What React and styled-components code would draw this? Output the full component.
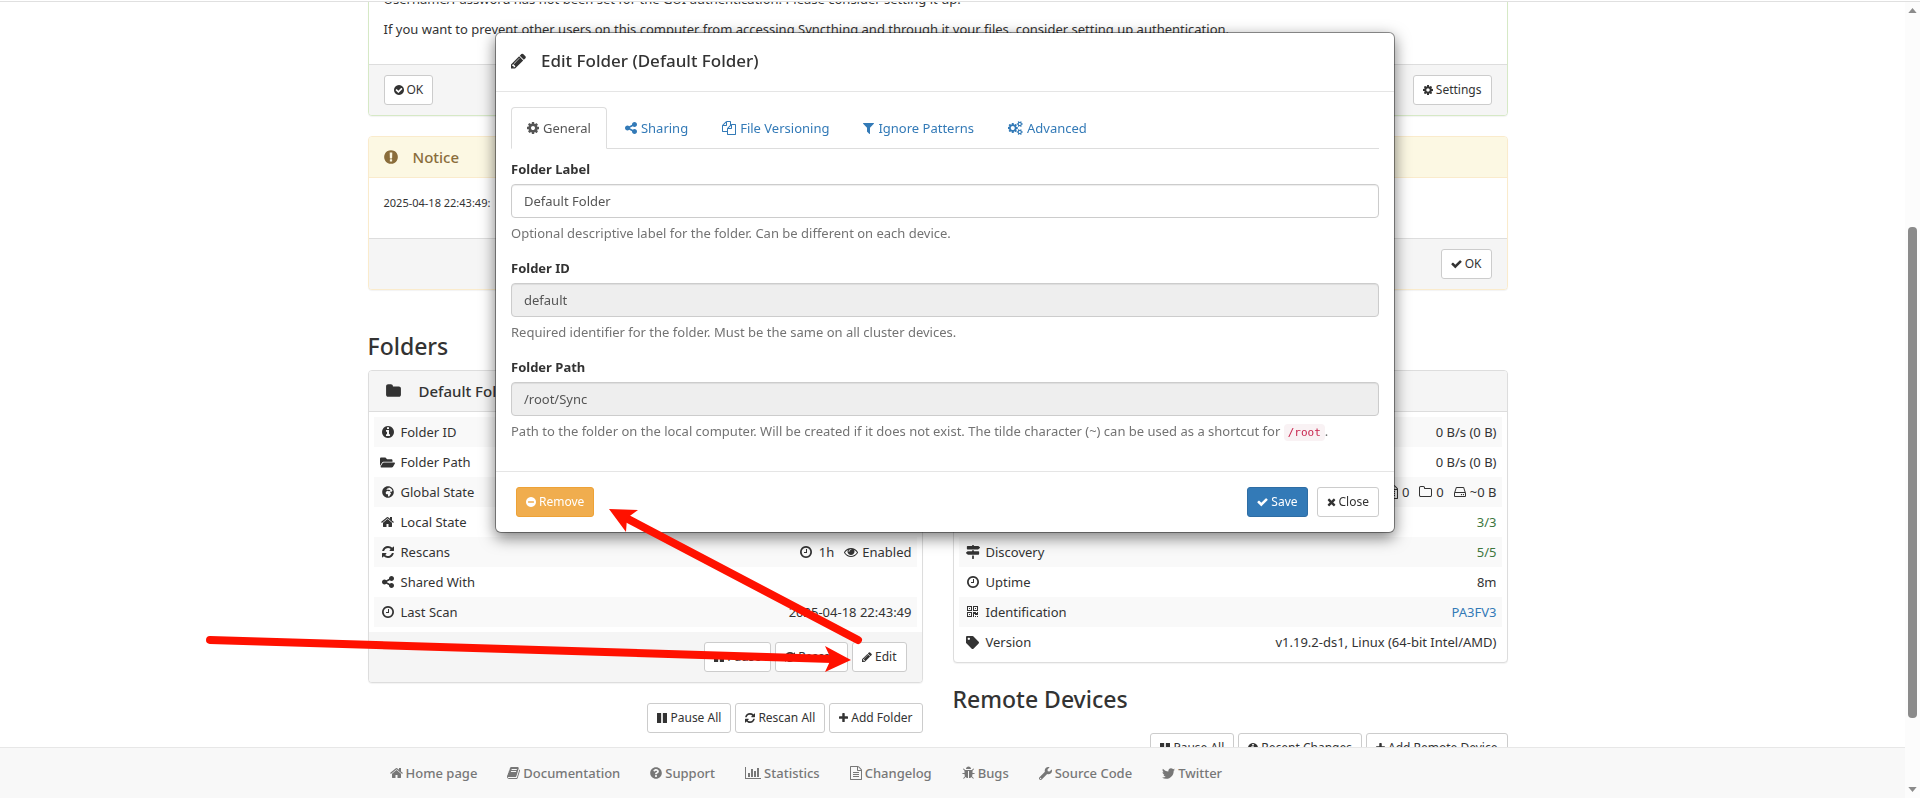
import React from 'react';
import styled, { createGlobalStyle, css } from 'styled-components';
import {
  FaFolderOpen, FaGlobeAfrica, FaMapSigns, FaTag,
  FaQuestionCircle, FaWrench, FaTwitter, FaSitemap, FaCloudDownloadAlt, FaCloudUploadAlt,
} from 'react-icons/fa';

const DISC = 'M1664 896q0 209-103 385.5t-279.5 279.5-385.5 103-385.5-103-279.5-279.5-103-385.5 103-385.5 279.5-279.5 385.5-103 385.5 103 279.5 279.5 103 385.5z';

/* Each glyph: [left edge, advance width, path] on a 1792-unit em. */
const GLYPHS = {
  clock: [128, 1536, 'M1024 544v448q0 14-9 23t-23 9h-320q-14 0-23-9t-9-23v-64q0-14 9-23t23-9h224v-352q0-14 9-23t23-9h64q14 0 23 9t9 23zm416 352q0-148-73-273t-198-198-273-73-273 73-198 198-73 273 73 273 198 198 273 73 273-73 198-198 73-273z' + DISC],
  checkCircle: [128, 1536, 'M1412 734q0-28-18-46l-91-90q-19-19-45-19t-45 19l-408 407-226-226q-19-19-45-19t-45 19l-91 90q-18 18-18 46 0 27 18 45l362 362q19 19 45 19 27 0 46-19l543-543q18-18 18-45z' + DISC],
  minusCircle: [128, 1536, 'M1344 960v-128q0-26-19-45t-45-19h-768q-26 0-45 19t-19 45v128q0 26 19 45t45 19h768q26 0 45-19t19-45z' + DISC],
  exclamation: [128, 1536, 'M1024 1375v-190q0-14-9.5-23.5t-22.5-9.5h-192q-13 0-23 10t-10 23v190q0 13 10 23t23 10h192q13 0 22.5-9.5t9.5-23.5zm-2-344l18-621q0-12-10-18-10-8-24-8h-220q-14 0-24 8-10 6-10 18l17 621q0 10 10 17.5t24 7.5h185q14 0 23.5-7.5t10.5-17.5z' + DISC],
  info: [128, 1536, 'M1152 1376v-160q0-14-9-23t-23-9h-96v-512q0-14-9-23t-23-9h-320q-14 0-23 9t-9 23v160q0 14 9 23t23 9h96v320h-96q-14 0-23 9t-9 23v160q0 14 9 23t23 9h448q14 0 23-9t9-23zm-128-896v-160q0-14-9-23t-23-9h-192q-14 0-23 9t-9 23v160q0 14 9 23t23 9h192q14 0 23-9t9-23z' + DISC],
  refresh: [128, 1536, 'M1639 1056q0 5-1 7-64 268-268 434.5t-478 166.5q-146 0-282.5-55t-243.5-157l-129 129q-19 19-45 19t-45-19-19-45v-448q0-26 19-45t45-19h448q26 0 45 19t19 45-19 45l-137 137q71 66 161 102t187 36q134 0 250-65t186-179q11-17 53-117 8-23 30-23h192q13 0 22.5 9.5t9.5 22.5zm25-800v448q0 26-19 45t-45 19h-448q-26 0-45-19t-19-45 19-45l138-138q-148-137-349-137-134 0-250 65t-186 179q-11 17-53 117-8 23-30 23h-199q-13 0-22.5-9.5t-9.5-22.5v-7q65-268 270-434.5t480-166.5q146 0 284 55.5t245 156.5l130-129q19-19 45-19t45 19 19 45z'],
  pencil: [128, 1536, 'M491 1536l91-91-235-235-91 91v107h128v128h107zm523-928q0-22-22-22-10 0-17 7l-542 542q-7 7-7 17 0 22 22 22 10 0 17-7l542-542q7-7 7-17zm-54-192l416 416-832 832h-416v-416zm683 96q0 53-37 90l-166 166-416-416 166-165q36-38 90-38 53 0 91 38l235 234q37 39 37 91z'],
  cog: [128, 1536, 'M1152 896q0-106-75-181t-181-75-181 75-75 181 75 181 181 75 181-75 75-181zm512-109v222q0 12-8 23t-20 13l-185 28q-19 54-39 91 35 50 107 138 10 12 10 25t-9 23q-27 37-99 108t-94 71q-12 0-26-9l-138-108q-44 23-91 38-16 136-29 186-7 28-36 28h-222q-14 0-24.5-8.5t-11.5-21.5l-28-184q-49-16-90-37l-141 107q-10 9-25 9-14 0-25-11-126-114-165-168-7-10-7-23 0-12 8-23 15-21 51-66.5t54-70.5q-27-50-41-99l-183-27q-13-2-21-12.5t-8-23.5v-222q0-12 8-23t19-13l186-28q14-46 39-92-40-57-107-138-10-12-10-24 0-10 9-23 26-36 98.5-107.5t94.5-71.5q13 0 26 10l138 107q44-23 91-38 16-136 29-186 7-28 36-28h222q14 0 24.5 8.5t11.5 21.5l28 184q49 16 90 37l142-107q9-9 24-9 13 0 25 10 129 119 165 170 7 8 7 22 0 12-8 23-15 21-51 66.5t-54 70.5q26 50 41 98l183 28q13 2 21 12.5t8 23.5z'],
  cogs: [0, 1856, 'M832 896q0-106-75-181t-181-75-181 75-75 181 75 181 181 75 181-75 75-181zm768 512q0-52-38-90t-90-38-90 38-38 90q0 53 37.5 90.5t90.5 37.5 90.5-37.5 37.5-90.5zm0-1024q0-52-38-90t-90-38-90 38-38 90q0 53 37.5 90.5t90.5 37.5 90.5-37.5 37.5-90.5zm-384 421v185q0 10-7 19.5t-16 10.5l-155 24q-11 35-32 76 34 48 90 115 7 11 7 20 0 12-7 19-23 30-82.5 89.5t-78.5 59.5q-11 0-21-7l-115-90q-37 19-77 31-11 108-23 155-7 24-30 24h-186q-11 0-20-7.5t-10-17.5l-23-153q-34-10-75-31l-118 89q-7 7-20 7-11 0-21-8-144-133-144-160 0-9 7-19 10-14 41-53t47-61q-23-44-35-82l-152-24q-10-1-17-9.5t-7-19.5v-185q0-10 7-19.5t16-10.5l155-24q11-35 32-76-34-48-90-115-7-11-7-20 0-12 7-20 22-30 82-89t79-59q11 0 21 7l115 90q34-18 77-32 11-108 23-154 7-24 30-24h186q11 0 20 7.5t10 17.5l23 153q34 10 75 31l118-89q8-7 20-7 11 0 21 8 144 133 144 160 0 8-7 19-12 16-42 54t-45 60q23 48 34 82l152 23q10 2 17 10.5t7 19.5zm640 533v140q0 16-149 31-12 27-30 52 51 113 51 138 0 4-4 7-122 71-124 71-8 0-46-47t-52-68q-20 2-30 2t-30-2q-14 21-52 68t-46 47q-2 0-124-71-4-3-4-7 0-25 51-138-18-25-30-52-149-15-149-31v-140q0-16 149-31 13-29 30-52-51-113-51-138 0-4 4-7 4-2 35-20t59-34 30-16q8 0 46 46.5t52 67.5q20-2 30-2t30 2q51-71 92-112l6-2q4 0 124 70 4 3 4 7 0 25-51 138 17 23 30 52 149 15 149 31zm0-1024v140q0 16-149 31-12 27-30 52 51 113 51 138 0 4-4 7-122 71-124 71-8 0-46-47t-52-68q-20 2-30 2t-30-2q-14 21-52 68t-46 47q-2 0-124-71-4-3-4-7 0-25 51-138-18-25-30-52-149-15-149-31v-140q0-16 149-31 13-29 30-52-51-113-51-138 0-4 4-7 4-2 35-20t59-34 30-16q8 0 46 46.5t52 67.5q20-2 30-2t30 2q51-71 92-112l6-2q4 0 124 70 4 3 4 7 0 25-51 138 17 23 30 52 149 15 149 31z'],
  filter: [192, 1408, 'M1595 295q17 41-14 70l-493 493v742q0 42-39 59-13 5-25 5-27 0-45-19l-256-256q-19-19-19-45v-486l-493-493q-31-29-14-70 17-39 59-39h1280q42 0 59 39z'],
  check: [64, 1664, 'M1671 566q0 40-28 68l-724 724-136 136q-28 28-68 28t-68-28l-136-136-362-362q-28-28-28-68t28-68l136-136q28-28 68-28t68 28l294 295 656-657q28-28 68-28t68 28l136 136q28 28 28 68z'],
  times: [192, 1408, 'M1490 1322q0 40-28 68l-136 136q-28 28-68 28t-68-28l-294-294-294 294q-28 28-68 28t-68-28l-136-136q-28-28-28-68t28-68l294-294-294-294q-28-28-28-68t28-68l136-136q28-28 68-28t68 28l294 294 294-294q28-28 68-28t68 28l136 136q28 28 28 68t-28 68l-294 294 294 294q28 28 28 68z'],
  pause: [128, 1536, 'M1664 192v1408q0 26-19 45t-45 19h-512q-26 0-45-19t-19-45v-1408q0-26 19-45t45-19h512q26 0 45 19t19 45zm-896 0v1408q0 26-19 45t-45 19h-512q-26 0-45-19t-19-45v-1408q0-26 19-45t45-19h512q26 0 45 19t19 45z'],
  plus: [192, 1408, 'M1600 736v192q0 40-28 68t-68 28h-416v416q0 40-28 68t-68 28h-192q-40 0-68-28t-28-68v-416h-416q-40 0-68-28t-28-68v-192q0-40 28-68t68-28h416v-416q0-40 28-68t68-28h192q40 0 68 28t28 68v416h416q40 0 68 28t28 68z'],
  home: [64, 1664, 'M1472 992v480q0 26-19 45t-45 19h-384v-384h-256v384h-384q-26 0-45-19t-19-45v-480q0-1 .5-3t.5-3l575-474 575 474q1 2 1 6zm223-69l-62 74q-8 9-21 11h-3q-13 0-21-7l-692-577-692 577q-12 8-24 7-13-2-21-11l-62-74q-8-10-7-23.5t11-21.5l719-599q32-26 76-26t76 26l244 204v-195q0-14 9-23t23-9h192q14 0 23 9t9 23v408l219 182q10 8 11 21.5t-7 23.5z'],
  folder: [64, 1664, 'M1728 608v704q0 92-66 158t-158 66h-1216q-92 0-158-66t-66-158v-960q0-92 66-158t158-66h320q92 0 158 66t66 158v32h672q92 0 158 66t66 158z'],
  folderOutline: [64, 1664, 'M1600 1312v-704q0-40-28-68t-68-28h-704q-40 0-68-28t-28-68v-64q0-40-28-68t-68-28h-320q-40 0-68 28t-28 68v960q0 40 28 68t68 28h1216q40 0 68-28t28-68zm128-704v704q0 92-66 158t-158 66h-1216q-92 0-158-66t-66-158v-960q0-92 66-158t158-66h320q92 0 158 66t66 158v32h672q92 0 158 66t66 158z'],
  eye: [0, 1792, 'M1664 960q-152-236-381-353 61 104 61 225 0 185-131.5 316.5t-316.5 131.5-316.5-131.5-131.5-316.5q0-121 61-225-229 117-381 353 133 205 333.5 326.5t434.5 121.5 434.5-121.5 333.5-326.5zm-720-384q0-20-14-34t-34-14q-125 0-214.5 89.5t-89.5 214.5q0 20 14 34t34 14 34-14 14-34q0-86 61-147t147-61q20 0 34-14t14-34zm848 384q0 34-20 69-140 230-376.5 368.5t-499.5 138.5-499.5-139-376.5-368q-20-35-20-69t20-69q140-229 376.5-368t499.5-139 499.5 139 376.5 368q20 35 20 69z'],
  files: [0, 1792, 'M1696 384q40 0 68 28t28 68v1216q0 40-28 68t-68 28h-960q-40 0-68-28t-28-68v-288h-544q-40 0-68-28t-28-68v-672q0-40 20-88t48-76l408-408q28-28 76-48t88-20h416q40 0 68 28t28 68v328q68-40 128-40h416zm-544 213l-299 299h299v-299zm-640-384l-299 299h299v-299zm196 647l316-316v-416h-384v416q0 40-28 68t-68 28h-416v640h512v-256q0-40 20-88t48-76zm956 804v-1152h-384v416q0 40-28 68t-68 28h-416v640h896z'],
  fileText: [128, 1536, 'M1596 380q28 28 48 76t20 88v1152q0 40-28 68t-68 28h-1344q-40 0-68-28t-28-68v-1600q0-40 28-68t68-28h896q40 0 88 20t76 48zm-444-244v376h376q-10-29-22-41l-313-313q-12-12-41-22zm384 1528v-1024h-416q-40 0-68-28t-28-68v-416h-768v1536h1280zm-1024-864q0-14 9-23t23-9h704q14 0 23 9t9 23v64q0 14-9 23t-23 9h-704q-14 0-23-9t-9-23v-64zm736 224q14 0 23 9t9 23v64q0 14-9 23t-23 9h-704q-14 0-23-9t-9-23v-64q0-14 9-23t23-9h704zm0 256q14 0 23 9t9 23v64q0 14-9 23t-23 9h-704q-14 0-23-9t-9-23v-64q0-14 9-23t23-9h704z'],
  barChart: [0, 2048, 'M640 896v512h-256v-512h256zm384-512v1024h-256v-1024h256zm1024 1152v128h-2048v-1536h128v1408h1920zm-640-896v768h-256v-768h256zm384-384v1152h-256v-1152h256z'],
  share: [128, 1536, 'M1344 1024q133 0 226.5 93.5t93.5 226.5-93.5 226.5-226.5 93.5-226.5-93.5-93.5-226.5q0-12 2-34l-360-180q-92 86-218 86-133 0-226.5-93.5t-93.5-226.5 93.5-226.5 226.5-93.5q126 0 218 86l360-180q-2-22-2-34 0-133 93.5-226.5t226.5-93.5 226.5 93.5 93.5 226.5-93.5 226.5-226.5 93.5q-126 0-218-86l-360 180q2 22 2 34t-2 34l360 180q92-86 218-86z'],
  book: [64, 1664, 'M1703 478q40 57 18 129l-275 906q-19 64-76.5 107.5t-122.5 43.5h-923q-77 0-148.5-53.5t-99.5-131.5q-24-67-2-127 0-4 3-27t4-37q1-8-3-21.5t-3-19.5q2-11 8-21t16.5-23.5 16.5-23.5q23-38 45-91.5t30-91.5q3-10 .5-30t-.5-28q3-11 17-28t17-23q21-36 42-92t25-90q1-9-2.5-32t.5-28q4-13 22-30.5t22-22.5q19-26 42.5-84.5t27.5-96.5q1-8-3-25.5t-2-26.5q2-8 9-18t18-23 17-21q8-12 16.5-30.5t15-35 16-36 19.5-32 26.5-23.5 36-11.5 47.5 5.5l-1 3q38-9 51-9h761q74 0 114 56t18 130l-274 906q-36 119-71.5 153.5t-128.5 34.5h-869q-27 0-38 15-11 16-1 43 24 70 144 70h923q29 0 56-15.5t35-41.5l300-987q7-22 5-57 38 15 59 43zm-1064 2q-4 13 2 22.5t20 9.5h608q13 0 25.5-9.5t16.5-22.5l21-64q4-13-2-22.5t-20-9.5h-608q-13 0-25.5 9.5t-16.5 22.5zm-83 256q-4 13 2 22.5t20 9.5h608q13 0 25.5-9.5t16.5-22.5l21-64q4-13-2-22.5t-20-9.5h-608q-13 0-25.5 9.5t-16.5 22.5z'],
  bug: [64, 1664, 'M1696 960q0 26-19 45t-45 19h-224q0 171-67 290l208 209q19 19 19 45t-19 45q-18 19-45 19t-45-19l-198-197q-5 5-15 13t-42 28.5-65 36.5-82 29-97 13v-896h-128v896q-51 0-101.5-13.5t-87-33-66-39-43.5-32.5l-15-14-183 207q-20 21-48 21-24 0-43-16-19-18-20.5-44.5t15.5-46.5l202-227q-58-114-58-274h-224q-26 0-45-19t-19-45 19-45 45-19h224v-294l-173-173q-19-19-19-45t19-45 45-19 45 19l173 173h844l173-173q19-19 45-19t45 19 19 45-19 45l-173 173v294h224q26 0 45 19t19 45zm-480-576h-640q0-133 93.5-226.5t226.5-93.5 226.5 93.5 93.5 226.5z'],
  qrcode: [192, 1408, 'M576 1152v128h-128v-128h128zm0-768v128h-128v-128h128zm768 0v128h-128v-128h128zm-1024 1023h384v-383h-384v383zm0-767h384v-384h-384v384zm768 0h384v-384h-384v384zm-256 256v640h-640v-640h640zm512 512v128h-128v-128h128zm256 0v128h-128v-128h128zm0-512v384h-384v-128h-128v384h-128v-640h384v128h128v-128h128zm-768-768v640h-640v-640h640zm768 0v640h-640v-640h640z'],
  hdd: [128, 1536, 'M1168 1216q0 33-23.5 56.5t-56.5 23.5-56.5-23.5-23.5-56.5 23.5-56.5 56.5-23.5 56.5 23.5 23.5 56.5zm256 0q0 33-23.5 56.5t-56.5 23.5-56.5-23.5-23.5-56.5 23.5-56.5 56.5-23.5 56.5 23.5 23.5 56.5zm112 160v-320q0-13-9.5-22.5t-22.5-9.5h-1216q-13 0-22.5 9.5t-9.5 22.5v320q0 13 9.5 22.5t22.5 9.5h1216q13 0 22.5-9.5t9.5-22.5zm-1230-480h1180l-157-482q-4-13-16-21.5t-26-8.5h-782q-14 0-26 8.5t-16 21.5zm1358 160v320q0 66-47 113t-113 47h-1216q-66 0-113-47t-47-113v-320q0-25 16-75l197-606q17-53 63-86t101-33h782q55 0 101 33t63 86l197 606q16 50 16 75z'],
};

const PACKAGED = {
  folderOpen: [FaFolderOpen, 1], globe: [FaGlobeAfrica, -2], signs: [FaMapSigns, 0], tag: [FaTag, -1],
  question: [FaQuestionCircle, -2], wrench: [FaWrench, -1], twitter: [FaTwitter, -1],
  sitemap: [FaSitemap, 0], download: [FaCloudDownloadAlt, 0], upload: [FaCloudUploadAlt, 0],
};

function Icon({ name, size = 14 }) {
  if (PACKAGED[name]) {
    const [Packaged, grow] = PACKAGED[name];
    return <Packaged size={size + grow} aria-hidden="true" />;
  }
  const [x, width, d] = GLYPHS[name];
  return (
    <svg viewBox={`${x} 0 ${width} 1792`} width={Math.round((size * width) / 1792)} height={size} fill="currentColor" fillRule="evenodd" aria-hidden="true">
      <path d={d} />
    </svg>
  );
}

const GlobalStyle = createGlobalStyle`
  *, *::before, *::after { box-sizing: border-box; }
  body {
    margin: 0;
    background: #fff;
    color: #333;
    font: 13px/20px "Noto Sans", "Open Sans", sans-serif;
    overflow: hidden;
  }
  svg { display: block; flex: none; }
  h3, h4, p, ul { margin: 0; padding: 0; font-weight: 500; }
  p { font-weight: 400; }
  button, input { font-family: inherit; }
  a { color: #337ab7; text-decoration: none; }
`;

const Shell = styled.div`
  display: grid;
  grid-template: 1px 1fr / 1fr 15px;
  height: 100vh;
  padding-top: 1px;
`;
const TopRule = styled.div`
  grid-column: 1 / -1;
  background: #e0e0e0;
`;
const Page = styled.div`
  display: flex;
  flex-direction: column;
  min-height: 0;
`;
const Content = styled.main`
  flex: 1;
  min-height: 0;
  overflow: hidden;
  padding-right: 30px;
`;
const Container = styled.div`
  max-width: 1140px;
  margin: 0 auto;
`;
const ScrolledContainer = styled(Container)`
  margin-top: -29px;
`;

const TONES = {
  default: { border: '#ddd', head: '#f5f5f5', text: '#333' },
  success: { border: '#d6e9c6', head: '#dff0d8', text: '#3c763d' },
  warning: { border: '#faebcc', head: '#fcf8e3', text: '#8a6d3b' },
};
const Panel = styled.section`
  border: 1px solid ${(p) => TONES[p.$tone || 'default'].border};
  border-radius: 4px;
  background: #fff;
  box-shadow: 0 1px 1px rgba(0, 0, 0, 0.05);
  margin-bottom: 20px;
  overflow: hidden;
`;
const PanelHeading = styled.h4`
  display: flex;
  align-items: center;
  gap: 15px;
  height: 41px;
  padding: 0 15px;
  font-size: 15px;
  line-height: 20px;
  color: ${(p) => TONES[p.$tone || 'default'].text};
  background: ${(p) => TONES[p.$tone || 'default'].head};
  border-bottom: 1px solid ${(p) => TONES[p.$tone || 'default'].border};
`;
const PanelBody = styled.div`
  padding: 15px;
  p { margin-bottom: 10px; }
`;
const LogLine = styled.p`
  font-size: 11px;
`;
const TableBody = styled.div`
  padding: 5px;
`;
const PanelFooter = styled.div`
  display: flex;
  justify-content: ${(p) => p.$align || 'flex-end'};
  gap: 4px;
  padding: 10px 15px;
  background: #f5f5f5;
  border-top: ${(p) => (p.$plain ? '0' : '1px solid #ddd')};
`;

const SOLID = {
  primary: css`color: #fff; background: #337ab7; border-color: #2e6da4;`,
  warning: css`color: #fff; background: #f0ad4e; border-color: #eea236;`,
};
const Button = styled.button`
  display: inline-flex;
  align-items: center;
  gap: 3px;
  height: 30px;
  padding: 0 9px;
  border: 1px solid #ccc;
  border-radius: 3px;
  background: #fff;
  color: #333;
  font-size: 12px;
  line-height: 18px;
  white-space: nowrap;
  cursor: pointer;
  ${(p) => SOLID[p.$kind]}
`;

const Columns = styled.div`
  display: grid;
  grid-template-columns: 1fr 1fr;
  gap: 30px;
  padding-top: 23px;
`;
const SectionTitle = styled.h3`
  font-size: 23px;
  line-height: 26px;
  margin-bottom: 11px;
`;
const LowerTitle = styled(SectionTitle)`
  margin: 23px 0 21px;
`;
const ButtonRow = styled.div`
  display: flex;
  justify-content: flex-end;
  gap: 4px;
`;

const Details = styled.table`
  width: 100%;
  border-collapse: collapse;
  tr:nth-child(odd) { background: #f9f9f9; }
  th, td { padding: 5px; font-weight: 400; height: 30px; }
`;
const RowLabel = styled.span`
  display: flex;
  align-items: center;
  gap: 4px;
`;
const IconSlot = styled.span`
  display: flex;
  justify-content: center;
  width: ${(p) => p.$width || 18}px;
`;
const RowValue = styled.span`
  display: flex;
  justify-content: flex-end;
  align-items: center;
  gap: 10px;
  color: ${(p) => (p.$good ? '#3c763d' : 'inherit')};
`;
const Stat = styled.span`
  display: flex;
  align-items: center;
  gap: ${(p) => p.$gap || 4}px;
`;

const Footer = styled.footer`
  height: 51px;
  flex: none;
  padding-right: 30px;
  background: #f8f8f8;
  border-top: 1px solid #e7e7e7;
`;
const FooterLinks = styled.ul`
  display: flex;
  gap: 30px;
  padding: 15px 22px;
  list-style: none;
`;
const FooterLink = styled.a`
  display: flex;
  align-items: center;
  gap: 3px;
  color: #777;
`;

const Scrollbar = styled.div`
  display: flex;
  flex-direction: column;
  align-items: center;
  padding: 6px 0;
  background: #fcfcfc;
`;
const ScrollSpace = styled.div`
  flex: ${(p) => p.$share};
`;
const ScrollThumb = styled.div`
  flex: 491;
  width: 9px;
  border-radius: 4px;
  background: #8b8b8b;
`;

const Overlay = styled.div`
  position: fixed;
  inset: 0;
  display: flex;
  justify-content: center;
  align-items: flex-start;
  padding: 32px 30px 0 0;
`;
const Dialog = styled.div`
  width: 900px;
  background: #fff;
  border: 1px solid rgba(0, 0, 0, 0.4);
  background-clip: padding-box;
  border-radius: 6px;
  box-shadow: 0 5px 15px rgba(0, 0, 0, 0.5);
`;
const DialogHeader = styled.div`
  display: flex;
  align-items: center;
  gap: 15px;
  height: 59px;
  padding: 0 15px 2px;
  border-bottom: 1px solid #e5e5e5;
`;
const DialogTitle = styled.h4`
  font-size: 17px;
  line-height: 20px;
`;
const DialogBody = styled.div`
  padding: 15px;
`;
const Tabs = styled.div`
  display: flex;
  gap: 2px;
  margin-bottom: 10px;
  border-bottom: 1px solid #ddd;
`;
const Tab = styled.button`
  display: flex;
  align-items: center;
  gap: 4px;
  height: 42px;
  margin-bottom: -1px;
  padding: 0 15px;
  border: 1px solid ${(p) => (p.$active ? '#ddd' : 'transparent')};
  border-bottom-color: ${(p) => (p.$active ? '#fff' : 'transparent')};
  border-radius: 4px 4px 0 0;
  background: ${(p) => (p.$active ? '#fff' : 'transparent')};
  color: ${(p) => (p.$active ? '#555' : '#337ab7')};
  font-size: 13px;
  line-height: 20px;
`;
const Field = styled.div`
  margin-bottom: 15px;
`;
const Label = styled.label`
  display: block;
  margin-bottom: 5px;
  font-weight: 700;
`;
const TextInput = styled.input`
  display: block;
  width: 100%;
  height: 34px;
  padding: 6px 12px;
  border: 1px solid #ccc;
  border-radius: 4px;
  background: ${(p) => (p.readOnly ? '#eee' : '#fff')};
  color: #555;
  font-size: 13px;
  line-height: 20px;
  box-shadow: inset 0 1px 1px rgba(0, 0, 0, 0.075);
`;
const Help = styled.p`
  margin-top: 5px;
  color: #737373;
`;
const Code = styled.code`
  padding: 2px 4px;
  border-radius: 4px;
  background: #f9f2f4;
  color: #c7254e;
  font: 11px/16px "DejaVu Sans Mono", monospace;
`;
const DialogFooter = styled.div`
  display: flex;
  align-items: center;
  gap: 9px;
  padding: 15px 15px 15px 20px;
  border-top: 1px solid #e5e5e5;
`;
const Spacer = styled.div`
  flex: 1;
`;
const Annotations = styled.svg`
  position: fixed;
  inset: 0;
  width: 100%;
  height: 100%;
  pointer-events: none;
`;

const FOLDER_ROWS = [
  ['info', 'Folder ID', 'default'],
  ['folderOpen', 'Folder Path', '/root/Sync'],
  ['globe', 'Global State', ''],
  ['home', 'Local State', ''],
  ['refresh', 'Rescans', (
    <>
      <Stat $gap={7}><Icon name="clock" />1h</Stat>
      <Stat><Icon name="eye" />Enabled</Stat>
    </>
  )],
  ['share', 'Shared With', ''],
  ['clock', 'Last Scan', '2025-04-18 22:43:49'],
];

const DEVICE_ROWS = [
  ['download', 'Download Rate', '0 B/s (0 B)'],
  ['upload', 'Upload Rate', '0 B/s (0 B)'],
  ['home', 'Local State (Total)', (
    <>
      <Stat><Icon name="fileText" />0</Stat>
      <Stat><Icon name="folderOutline" />0</Stat>
      <Stat><Icon name="hdd" />~0 B</Stat>
    </>
  )],
  ['sitemap', 'Listeners', '3/3', true],
  ['signs', 'Discovery', '5/5', true],
  ['clock', 'Uptime', '8m'],
  ['qrcode', 'Identification', <a href="#id">PA3FV3</a>],
  ['tag', 'Version', 'v1.19.2-ds1, Linux (64-bit Intel/AMD)'],
];

const FOOTER_LINKS = [
  ['home', 'Home page'], ['book', 'Documentation'], ['question', 'Support'], ['barChart', 'Statistics'],
  ['fileText', 'Changelog'], ['bug', 'Bugs'], ['wrench', 'Source Code'], ['twitter', 'Twitter'],
];

const TABS = [
  ['cog', 'General'], ['share', 'Sharing'], ['files', 'File Versioning'], ['filter', 'Ignore Patterns'], ['cogs', 'Advanced'],
];

function IconButton({ icon, children, ...rest }) {
  return <Button type="button" {...rest}><Icon name={icon} size={12} />{children}</Button>;
}

function DetailTable({ rows }) {
  return (
    <Details>
      <tbody>
        {rows.map(([icon, label, value, good]) => (
          <tr key={label}>
            <th scope="row"><RowLabel><IconSlot><Icon name={icon} /></IconSlot>{label}</RowLabel></th>
            <td><RowValue $good={good}>{value}</RowValue></td>
          </tr>
        ))}
      </tbody>
    </Details>
  );
}

function EditFolderDialog() {
  return (
    <Overlay>
      <Dialog role="dialog" aria-labelledby="dialog-title">
        <DialogHeader>
          <Icon name="pencil" size={18} />
          <DialogTitle id="dialog-title">Edit Folder (Default Folder)</DialogTitle>
        </DialogHeader>
        <DialogBody>
          <Tabs role="tablist">
            {TABS.map(([icon, label], i) => (
              <Tab key={label} type="button" role="tab" aria-selected={i === 0} $active={i === 0}>
                <Icon name={icon} />{label}
              </Tab>
            ))}
          </Tabs>
          <Field>
            <Label htmlFor="folder-label">Folder Label</Label>
            <TextInput id="folder-label" defaultValue="Default Folder" />
            <Help>Optional descriptive label for the folder. Can be different on each device.</Help>
          </Field>
          <Field>
            <Label htmlFor="folder-id">Folder ID</Label>
            <TextInput id="folder-id" defaultValue="default" readOnly />
            <Help>Required identifier for the folder. Must be the same on all cluster devices.</Help>
          </Field>
          <Field>
            <Label htmlFor="folder-path">Folder Path</Label>
            <TextInput id="folder-path" defaultValue="/root/Sync" readOnly />
            <Help>
              Path to the folder on the local computer. Will be created if it does not exist. The tilde character (~) can be used as a shortcut for <Code>/root</Code>.
            </Help>
          </Field>
        </DialogBody>
        <DialogFooter>
          <IconButton icon="minusCircle" $kind="warning">Remove</IconButton>
          <Spacer />
          <IconButton icon="check" $kind="primary">Save</IconButton>
          <IconButton icon="times">Close</IconButton>
        </DialogFooter>
      </Dialog>
    </Overlay>
  );
}

export default function App() {
  return (
    <>
      <GlobalStyle />
      <Shell>
        <TopRule />
        <Page>
          <Content>
            <ScrolledContainer>
              <Panel $tone="success">
                <PanelBody>
                  <p>Username/Password has not been set for the GUI authentication. Please consider setting it up.</p>
                  <p>If you want to prevent other users on this computer from accessing Syncthing and through it your files, consider setting up authentication.</p>
                </PanelBody>
                <PanelFooter $align="space-between">
                  <IconButton icon="checkCircle">OK</IconButton>
                  <IconButton icon="cog">Settings</IconButton>
                </PanelFooter>
              </Panel>
              <Panel $tone="warning">
                <PanelHeading $tone="warning"><Icon name="exclamation" size={16} />Notice</PanelHeading>
                <PanelBody><LogLine>2025-04-18 22:43:49:</LogLine></PanelBody>
                <PanelFooter><IconButton icon="check">OK</IconButton></PanelFooter>
              </Panel>
              <Columns>
                <div>
                  <SectionTitle>Folders</SectionTitle>
                  <Panel>
                    <PanelHeading><IconSlot $width={20}><Icon name="folder" size={16} /></IconSlot>Default Folder</PanelHeading>
                    <TableBody><DetailTable rows={FOLDER_ROWS} /></TableBody>
                    <PanelFooter $plain>
                      <IconButton icon="pause">Pause</IconButton>
                      <IconButton icon="refresh">Rescan</IconButton>
                      <IconButton icon="pencil">Edit</IconButton>
                    </PanelFooter>
                  </Panel>
                  <ButtonRow>
                    <IconButton icon="pause">Pause All</IconButton>
                    <IconButton icon="refresh">Rescan All</IconButton>
                    <IconButton icon="plus">Add Folder</IconButton>
                  </ButtonRow>
                </div>
                <div>
                  <SectionTitle>This Device</SectionTitle>
                  <Panel>
                    <PanelHeading><IconSlot $width={20}><Icon name="home" size={16} /></IconSlot>Syncthing</PanelHeading>
                    <TableBody><DetailTable rows={DEVICE_ROWS} /></TableBody>
                  </Panel>
                  <LowerTitle>Remote Devices</LowerTitle>
                  <ButtonRow>
                    <IconButton icon="pause">Pause All</IconButton>
                    <IconButton icon="info">Recent Changes</IconButton>
                    <IconButton icon="plus">Add Remote Device</IconButton>
                  </ButtonRow>
                </div>
              </Columns>
            </ScrolledContainer>
          </Content>
          <Footer>
            <Container>
              <FooterLinks>
                {FOOTER_LINKS.map(([icon, label]) => (
                  <li key={label}><FooterLink href="#footer"><Icon name={icon} />{label}</FooterLink></li>
                ))}
              </FooterLinks>
            </Container>
          </Footer>
        </Page>
        <Scrollbar aria-hidden="true">
          <svg viewBox="0 0 10 6" width="9" height="5" fill="#8b8b8b"><path d="M0 6L5 0L10 6z" /></svg>
          <ScrollSpace $share={214} />
          <ScrollThumb />
          <ScrollSpace $share={69} />
          <svg viewBox="0 0 10 6" width="9" height="5" fill="#8b8b8b"><path d="M0 0L5 6L10 0z" /></svg>
        </Scrollbar>
      </Shell>
      <EditFolderDialog />
      <Annotations aria-hidden="true" fill="#ff1100" stroke="#ff1100">
        <path d="M210 640L832 659" strokeWidth="8" strokeLinecap="round" />
        <path d="M851 660L825 646L831 659L825 672z" stroke="none" />
        <path d="M858 640L626 518" strokeWidth="8" strokeLinecap="round" />
        <path d="M609 509L638 510L627 518L626 532z" stroke="none" />
      </Annotations>
    </>
  );
}
